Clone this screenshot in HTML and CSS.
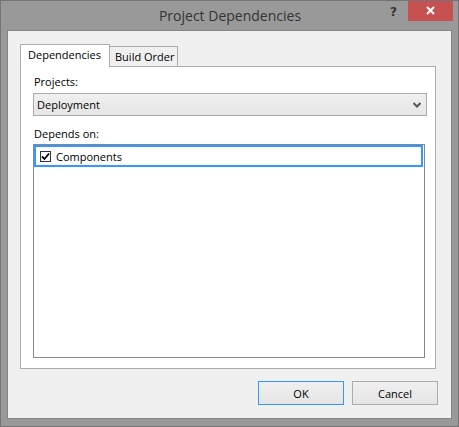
FILE: index.html
```html
<!DOCTYPE html>
<html>
<head>
<meta charset="utf-8">
<link rel="stylesheet" href="styles.css">
</head>
<body>
<div class="window">
  <div class="titlebar">
    <span class="title">Project Dependencies</span>
    <div class="controls">
      <span class="help">?</span>
      <span class="close"><svg width="9" height="9" viewBox="0 0 9 9"><path d="M1 1 L8 8 M8 1 L1 8" stroke="#fff" stroke-width="2" fill="none"/></svg></span>
    </div>
  </div>
  <div class="client">
    <div class="tabs">
      <div class="tab active">Dependencies</div>
      <div class="tab">Build Order</div>
    </div>
    <div class="panel">
      <div class="label">Projects:</div>
      <div class="combo">
        <span>Deployment</span>
        <svg class="chev" width="8" height="6" viewBox="0 0 8 6"><path d="M0.5 1 L4 4.5 L7.5 1" stroke="#555" stroke-width="2" fill="none"/></svg>
      </div>
      <div class="label label2">Depends on:</div>
      <div class="list">
        <div class="item">
          <span class="check"><svg width="9" height="9" viewBox="0 0 9 9"><path d="M1 4.5 L3.5 7 L8 1.5" stroke="#000" stroke-width="1.8" fill="none"/></svg></span>
          <span>Components</span>
        </div>
      </div>
    </div>
    <div class="buttons">
      <button class="btn default">OK</button>
      <button class="btn">Cancel</button>
    </div>
  </div>
</div>
</body>
</html>
```

FILE: styles.css
```css
* { box-sizing: border-box; }
html, body { margin: 0; padding: 0; }
body {
  width: 459px;
  height: 427px;
  font-family: "Open Sans", "Noto Sans", sans-serif;
  font-size: 11px;
  color: #000;
}
.window {
  width: 459px;
  height: 427px;
  background: #999999;
  border: 1px solid #747474;
  padding: 29px 6px 7px 6px;
  position: relative;
  display: flex;
  flex-direction: column;
}
.titlebar {
  position: absolute;
  left: 0;
  top: 0;
  right: 0;
  height: 29px;
  text-align: center;
}
.title {
  display: block;
  font-size: 14px;
  line-height: 29px;
  color: #333;
  padding-left: 1px;
}
.controls {
  position: absolute;
  top: 0;
  right: 5px;
  display: flex;
  align-items: flex-start;
}
.help {
  font-family: "DejaVu Sans", sans-serif;
  font-weight: bold;
  font-size: 12px;
  color: #333;
  width: 26px;
  line-height: 22px;
  text-align: left;
  padding-left: 8px;
}
.close {
  width: 45px;
  height: 20px;
  background: #c75050;
  display: flex;
  align-items: center;
  justify-content: center;
}
.close svg { margin-top: -2px; }
.client {
  flex: 1;
  background: #f0f0f0;
  border: 1px solid #858585;
  padding: 13px 15px 13px 12px;
  display: flex;
  flex-direction: column;
}
.tabs {
  display: flex;
  align-items: flex-end;
  height: 22px;
  position: relative;
  z-index: 1;
}
.tab {
  height: 20px;
  border: 1px solid #adadad;
  border-bottom: none;
  background: #f0f0f0;
  padding: 0 0 0 5px;
  line-height: 20px;
  width: 69px;
  margin-left: -1px;
  white-space: nowrap;
}
.tab.active {
  height: 23px;
  margin-bottom: -1px;
  background: #fff;
  width: 90px;
  margin-left: 0;
  padding-left: 7px;
  line-height: 20px;
}
.panel {
  height: 303px;
  background: #fff;
  border: 1px solid #adadad;
  padding: 7px 8px 10px 12px;
  display: flex;
  flex-direction: column;
}
.label {
  height: 16px;
  line-height: 16px;
  margin-left: 1px;
}
.combo {
  margin-top: 3px;
  height: 23px;
  border: 1px solid #acacac;
  background: linear-gradient(#f0f0f0, #e5e5e5);
  display: flex;
  align-items: center;
  justify-content: space-between;
  padding: 0 5px 0 3px;
}
.chev { margin-top: 1px; }
.label2 { margin-top: 10px; }
.list {
  margin-top: 2px;
  margin-right: 2px;
  flex: 1;
  border: 1px solid #828790;
  background: #fff;
}
.item {
  height: 22px;
  margin-right: 1px;
  border: 2px solid #3399ff;
  display: flex;
  align-items: center;
  padding-left: 4px;
}
.check {
  width: 11px;
  height: 11px;
  border: 1px solid #333;
  background: #fff;
  display: flex;
  align-items: center;
  justify-content: center;
  margin-right: 5px;
}
.buttons {
  margin-top: 12px;
  display: flex;
  justify-content: flex-end;
  gap: 8px;
  padding-right: 0;
  margin-right: -2px;
}
.btn {
  width: 86px;
  height: 24px;
  border: 1px solid #acacac;
  background: linear-gradient(#f0f0f0, #e5e5e5);
  font-family: "Open Sans", "Noto Sans", sans-serif;
  font-size: 11px;
  color: #000;
  padding: 0;
}
.btn.default { border-color: #3399ff; }
```
